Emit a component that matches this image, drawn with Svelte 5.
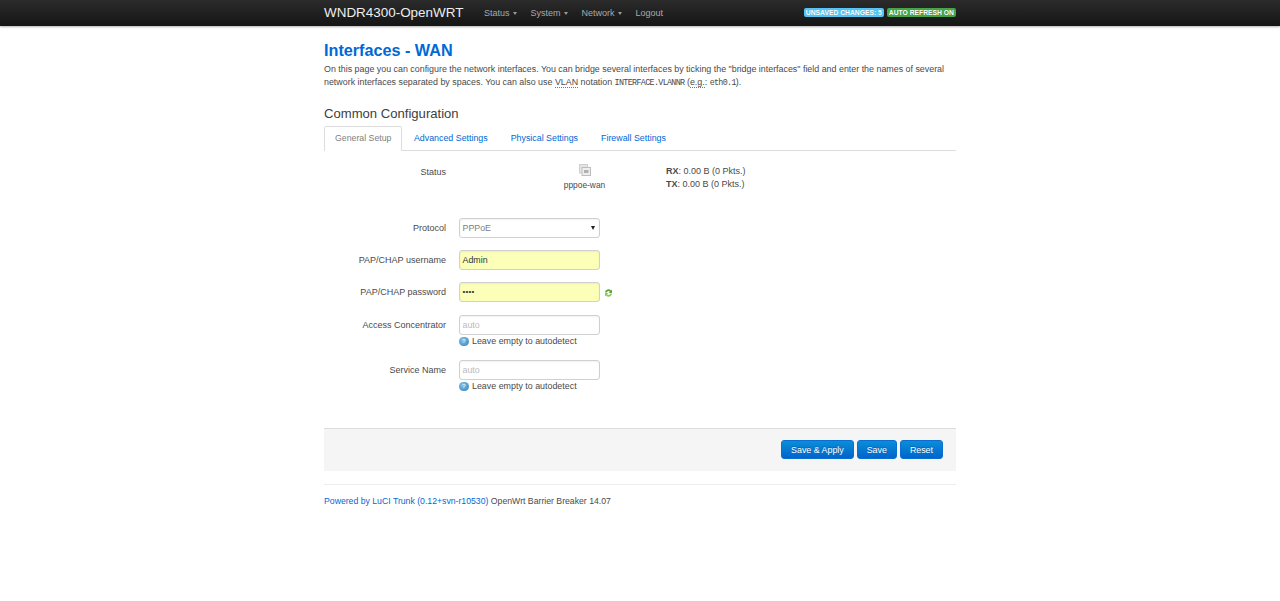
<script>
  const tabs = ['Advanced Settings', 'Physical Settings', 'Firewall Settings'];
  const menu = ['Status', 'System', 'Network'];
</script>

<header class="nav">
  <div class="wrap navin">
    <a class="brand" href="#b">WNDR4300-OpenWRT</a>
    <nav class="menu">
      {#each menu as m}
        <span class="mi">{m}<i class="caret"></i></span>
      {/each}
      <span class="mi">Logout</span>
    </nav>
    <div class="badges">
      <span class="badge blue">UNSAVED CHANGES: 5</span>
      <span class="badge green">AUTO REFRESH ON</span>
    </div>
  </div>
</header>

<main class="wrap">
  <h2>Interfaces - WAN</h2>
  <p class="desc">On this page you can configure the network interfaces. You can bridge several interfaces by ticking the "bridge interfaces" field and enter the names of several network interfaces separated by spaces. You can also use <abbr>VLAN</abbr> notation <code>INTERFACE.VLANNR</code> (<abbr>e.g.</abbr>: <code>eth0.1</code>).</p>

  <h3>Common Configuration</h3>
  <div class="tabs">
    <span class="tab active">General Setup</span>
    {#each tabs as t}<span class="tab">{t}</span>{/each}
  </div>

  <section class="form">
    <div class="row status">
      <div class="lab">Status</div>
      <div class="st-icon">
        <svg width="12" height="12" viewBox="0 0 12 12">
          <rect x="0.5" y="0.5" width="8" height="8.5" fill="#e4e4e4" stroke="#cfcfcf"/>
          <rect x="3" y="3.5" width="8.5" height="8" fill="#eeeeee" stroke="#bdbdbd"/>
          <rect x="5" y="6" width="4.5" height="3" fill="#b0b0b0"/>
        </svg>
        <span>pppoe-wan</span>
      </div>
      <div class="st-data">
        <div><b>RX</b>: 0.00 B (0 Pkts.)</div>
        <div><b>TX</b>: 0.00 B (0 Pkts.)</div>
      </div>
    </div>

    <div class="row r-proto">
      <div class="lab">Protocol</div>
      <div class="ctl select"><span>PPPoE</span><i class="arrow"></i></div>
    </div>
    <div class="row r-input">
      <div class="lab">PAP/CHAP username</div>
      <div class="ctl yellow">Admin</div>
    </div>
    <div class="row r-input r-pass">
      <div class="lab">PAP/CHAP password</div>
      <div class="ctl yellow dots">••••</div>
      <svg class="reveal" width="9" height="10" viewBox="0 0 9 10">
        <path d="M1 4.5 A3.4 3.4 0 0 1 7 2.6 L8 1.5 V5 H4.6 L5.9 3.7 A2 2 0 0 0 2.6 4.5 Z" fill="#5aa832"/>
        <path d="M8 5.5 A3.4 3.4 0 0 1 2 7.4 L1 8.5 V5 H4.4 L3.1 6.3 A2 2 0 0 0 6.4 5.5 Z" fill="#8ccc5e"/>
      </svg>
    </div>
    <div class="row r-help">
      <div class="lab">Access Concentrator</div>
      <div class="col">
        <div class="ctl ph">auto</div>
        <div class="help"><i class="info">?</i>Leave empty to autodetect</div>
      </div>
    </div>
    <div class="row r-help">
      <div class="lab">Service Name</div>
      <div class="col">
        <div class="ctl ph">auto</div>
        <div class="help"><i class="info">?</i>Leave empty to autodetect</div>
      </div>
    </div>
  </section>

  <div class="actions">
    <span class="btn">Save &amp; Apply</span>
    <span class="btn">Save</span>
    <span class="btn">Reset</span>
  </div>

  <footer><a href="#l">Powered by LuCI Trunk (0.12+svn-r10530)</a> OpenWrt Barrier Breaker 14.07</footer>
</main>

<style>
  :global(body) {
    margin: 0;
    background: #fff;
    font-family: "Liberation Sans", Arial, sans-serif;
    font-size: 8.85px;
    line-height: 13px;
    color: #4a4a4a;
  }
  .wrap { width: 632px; margin: 0 auto; }
  .nav {
    height: 26px;
    background: linear-gradient(#2b2b2b, #151515);
    box-shadow: 0 1px 2px rgba(0,0,0,.3);
  }
  .navin { display: flex; align-items: center; height: 26px; }
  .brand { color: #eee; font-size: 13.45px; text-decoration: none; width: 160px; margin-top: -2px; }
  .menu { display: flex; gap: 14px; color: #aaa; font-size: 9px; }
  .mi { display: flex; align-items: center; }
  .caret {
    margin-left: 3px; margin-top: 1px;
    border-left: 2.5px solid transparent;
    border-right: 2.5px solid transparent;
    border-top: 3px solid #999;
  }
  .badges { margin-left: auto; display: flex; gap: 3px; margin-top: -2px; }
  .badge {
    font-size: 6.75px; font-weight: bold; line-height: 9px; color: #fff;
    padding: 0 2px; border-radius: 2px;
    text-shadow: 0 0 1px rgba(0,0,0,.2);
  }
  .blue { background: #55c5f5; }
  .green { background: #46a546; }

  h2 {
    margin: 15px 0 0;
    font-size: 16.2px; line-height: 18px; font-weight: bold; color: #0069d6;
  }
  .desc { margin: 4px 0 0; line-height: 12.5px; font-size: 8.9px; }
  abbr { border-bottom: 1px dotted #777; text-decoration: none; }
  code { font-family: "Liberation Mono", "DejaVu Sans Mono", monospace; font-size: 8.4px; letter-spacing: -0.66px; }
  h3 {
    margin: 17px 0 0;
    font-size: 13.1px; line-height: 16px; font-weight: normal; color: #404040;
  }
  .tabs {
    display: flex; margin-top: 4px; height: 25px; box-sizing: border-box;
    border-bottom: 1px solid #ddd;
  }
  .tab {
    padding: 0 10.5px; line-height: 23px; height: 25px; box-sizing: border-box;
    color: #0069d6; font-size: 8.85px;
    border: 1px solid transparent; border-bottom: 0;
  }
  .tab.active {
    color: #808080; background: #fff; border-color: #ddd; font-size: 8.75px;
    border-radius: 2px 2px 0 0; padding: 0 10px;
  }
  .row { display: flex; align-items: flex-start; }
  .lab { width: 122px; margin-right: 13px; text-align: right; font-size: 9px; }
  .status { height: 67px; padding-top: 11px; box-sizing: border-box; }
  .st-icon {
    width: 163px; padding-left: 44px; display: flex; flex-direction: column; align-items: center;
    margin-top: 2px; gap: 3px; font-size: 8.4px;
  }
  .st-data { line-height: 12.5px; margin-top: 3px; font-size: 9px; }
  .r-proto { height: 32px; }
  .r-input { height: 32px; }
  .r-pass { height: 33px; }
  .r-help { height: 45px; }
  .row .lab { line-height: 20px; }
  .ctl {
    width: 141px; height: 20px; box-sizing: border-box;
    border: 1px solid #d0d0d0; border-radius: 3px; padding: 0 2.5px; line-height: 18px;
    box-shadow: inset 0 1px 2px rgba(0,0,0,.06);
  }
  .select { display: flex; justify-content: space-between; align-items: center; color: #808080; padding-right: 4px; }
  .arrow {
    border-left: 2.5px solid transparent; border-right: 2.5px solid transparent;
    border-top: 4px solid #222;
  }
  .yellow { background: #fbffb8; color: #333; }
  .dots { font-size: 8px; letter-spacing: .2px; }
  .reveal { margin: 6px 0 0 4px; }
  .ph { color: #bbb; }
  .col { display: flex; flex-direction: column; }
  .help { display: flex; align-items: center; margin-top: 0; line-height: 13px; font-size: 8.9px; }
  .info {
    width: 9.5px; height: 9.5px; border-radius: 50%; margin-right: 3.5px; font-style: normal;
    background: radial-gradient(circle at 40% 35%, #8cc4e8, #2a7db8);
    color: #d8ecf8; font-size: 6px; line-height: 9.5px; text-align: center; font-weight: bold;
  }
  .actions {
    margin-top: 23px; height: 43px; box-sizing: border-box;
    background: #f5f5f5; border-top: 1px solid #ddd;
    display: flex; justify-content: flex-end; align-items: center; gap: 3px;
    padding: 0 13px 1px 0;
  }
  .btn {
    height: 19px; line-height: 18px; box-sizing: border-box; padding: 0 9px;
    background: linear-gradient(#0a8ed8, #0064cd); border: 1px solid #0a6fd0;
    border-radius: 3px; color: #fff; text-shadow: 0 -1px 0 rgba(0,0,0,.25); font-size: 8.85px;
  }
  footer { margin-top: 13px; border-top: 1px solid #eee; padding-top: 10px; font-size: 8.7px; }
  footer a { color: #0069d6; text-decoration: none; }
</style>
